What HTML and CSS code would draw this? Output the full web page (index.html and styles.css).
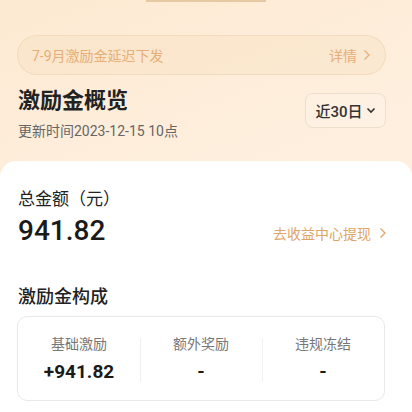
FILE: index.html
```html
<!DOCTYPE html>
<html lang="zh">
<head>
<meta charset="utf-8">
<link rel="stylesheet" href="styles.css">
</head>
<body>
<div class="page">
  <div class="top">
    <div class="tab"></div>
    <div class="notice">
      <span class="notice-text">7-9月激励金延迟下发</span>
      <span class="notice-link">详情<svg class="chev" width="8" height="12" viewBox="0 0 8 12"><path d="M1.5 1.5L6 6l-4.5 4.5" fill="none" stroke="currentColor" stroke-width="1.3"/></svg></span>
    </div>
    <div class="head">
      <div class="head-text">
        <h1 class="title">激励金概览</h1>
        <div class="updated">更新时间2023-12-15 10点</div>
      </div>
      <div class="range">近30日<svg class="down" width="10" height="7" viewBox="0 0 10 7"><path d="M1.5 1.5L5 5l3.5-3.5" fill="none" stroke="currentColor" stroke-width="1.6"/></svg></div>
    </div>
  </div>
  <div class="card">
    <div class="total-label">总金额（元）</div>
    <div class="total-row">
      <div class="total">941.82</div>
      <div class="withdraw">去收益中心提现<svg class="chev" width="8" height="12" viewBox="0 0 8 12"><path d="M1.5 1.5L6 6l-4.5 4.5" fill="none" stroke="currentColor" stroke-width="1.3"/></svg></div>
    </div>
    <h2 class="section">激励金构成</h2>
    <div class="parts">
      <div class="part">
        <div class="part-label">基础激励</div>
        <div class="part-value">+941.82</div>
      </div>
      <div class="part">
        <div class="part-label">额外奖励</div>
        <div class="part-value">-</div>
      </div>
      <div class="part">
        <div class="part-label">违规冻结</div>
        <div class="part-value">-</div>
      </div>
    </div>
  </div>
</div>
</body>
</html>
```

FILE: styles.css
```css
* { box-sizing: border-box; }
html, body { margin: 0; padding: 0; }
body {
  font-family: "Roboto", "Noto Sans CJK SC", sans-serif;
  background: #ffffff;
  width: 412px;
  height: 412px;
  overflow: hidden;
}
.page {
  background: linear-gradient(160deg, #fdead2 0%, #feefdf 50%, #fdebd6 100%);
}
.top {
  padding: 0 26px 0 17px;
  height: 161px;
}
.tab {
  width: 120px;
  height: 2px;
  margin: 0 auto;
  background: #e6c8a2;
  position: relative;
  left: 4px;
}
.notice {
  margin-top: 33px;
  height: 40px;
  border-radius: 20px;
  background: rgba(240, 212, 175, 0.22);
  border: 1px solid rgba(232, 205, 170, 0.45);
  display: flex;
  align-items: center;
  justify-content: space-between;
  padding: 0 14px 0 14px;
  color: #e8ae78;
  font-size: 14px;
}
.notice-link {
  display: flex;
  align-items: center;
  gap: 6px;
}
.chev { display: block; }
.head {
  display: flex;
  justify-content: space-between;
  align-items: flex-start;
  margin-top: 11px;
}
.title {
  margin: 0;
  font-size: 22px;
  line-height: 30px;
  font-weight: 700;
  color: #222;
  padding-left: 1px;
}
.updated {
  margin-top: 5px;
  font-size: 14px;
  line-height: 20px;
  color: #666;
  padding-left: 1px;
}
.range {
  margin-top: 7px;
  height: 35px;
  width: 81px;
  border: 1px solid #eedfcd;
  border-radius: 8px;
  display: flex;
  align-items: center;
  justify-content: center;
  gap: 3px;
  font-size: 15px;
  font-weight: 500;
  color: #333;
  background: rgba(255, 250, 243, 0.3);
}
.down { display: block; }
.card {
  background: #fff;
  border-radius: 16px 16px 0 0;
  padding: 26px 25px 20px 18px;
  height: 251px;
}
.total-label {
  font-size: 17px;
  line-height: 24px;
  color: #222;
}
.total-row {
  display: flex;
  justify-content: space-between;
  align-items: center;
  margin-top: 2px;
}
.total {
  font-size: 28px;
  line-height: 36px;
  font-weight: 500;
  color: #1a1a1a;
}
.withdraw {
  display: flex;
  align-items: center;
  gap: 8px;
  font-size: 14px;
  color: #e0a465;
  padding-top: 4px;
}
.section {
  margin: 35px 0 0;
  font-size: 18px;
  line-height: 26px;
  font-weight: 500;
  color: #222;
}
.parts {
  margin: 6px 2px 0 -1px;
  height: 85px;
  border: 1px solid #e8e8e8;
  border-radius: 10px;
  display: grid;
  grid-template-columns: 1fr 1fr 1fr;
  align-items: center;
}
.part {
  text-align: center;
  position: relative;
}
.part + .part::before {
  content: "";
  position: absolute;
  left: 0;
  top: 4px;
  bottom: 2px;
  width: 1px;
  background: #f0f0f0;
}
.part-label {
  font-size: 14px;
  line-height: 20px;
  color: #777;
}
.part-value {
  margin-top: 6px;
  font-size: 19px;
  line-height: 24px;
  font-weight: 700;
  color: #1a1a1a;
}
```
